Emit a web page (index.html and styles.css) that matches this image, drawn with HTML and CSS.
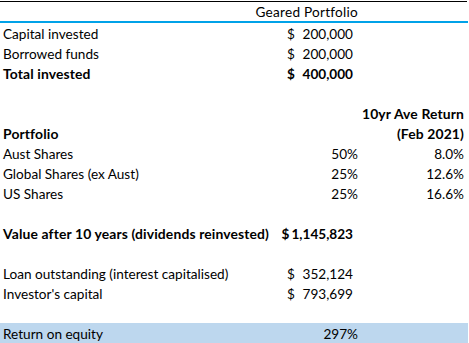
FILE: index.html
```html
<!DOCTYPE html>
<html>
<head>
<meta charset="utf-8">
<link rel="stylesheet" href="styles.css">
</head>
<body>
<div class="sheet">
  <div class="topline"></div>
  <div class="row head">
    <div class="cell title">Geared Portfolio</div>
    <div class="cell"></div>
  </div>
  <div class="blueline"></div>

  <div class="row"><div class="cell a">Capital invested</div><div class="cell b acc"><span>$</span><span>200,000</span></div><div class="cell c"></div></div>
  <div class="row"><div class="cell a">Borrowed funds</div><div class="cell b acc"><span>$</span><span>200,000</span></div><div class="cell c"></div></div>
  <div class="row bold"><div class="cell a">Total invested</div><div class="cell b acc"><span>$</span><span>400,000</span></div><div class="cell c"></div></div>
  <div class="row"><div class="cell a"></div><div class="cell b"></div><div class="cell c"></div></div>
  <div class="row bold"><div class="cell a"></div><div class="cell b"></div><div class="cell c">10yr Ave Return</div></div>
  <div class="row bold"><div class="cell a">Portfolio</div><div class="cell b"></div><div class="cell c">(Feb 2021)</div></div>
  <div class="row"><div class="cell a">Aust Shares</div><div class="cell b pct">50%</div><div class="cell c">8.0%</div></div>
  <div class="row"><div class="cell a">Global Shares (ex Aust)</div><div class="cell b pct">25%</div><div class="cell c">12.6%</div></div>
  <div class="row"><div class="cell a">US Shares</div><div class="cell b pct">25%</div><div class="cell c">16.6%</div></div>
  <div class="row"><div class="cell a"></div><div class="cell b"></div><div class="cell c"></div></div>
  <div class="row bold"><div class="cell a">Value after 10 years (dividends reinvested)</div><div class="cell b acc tight"><span>$</span><span>1,145,823</span></div><div class="cell c"></div></div>
  <div class="row"><div class="cell a"></div><div class="cell b"></div><div class="cell c"></div></div>
  <div class="row"><div class="cell a">Loan outstanding (interest capitalised)</div><div class="cell b acc"><span>$</span><span>352,124</span></div><div class="cell c"></div></div>
  <div class="row"><div class="cell a">Investor's capital</div><div class="cell b acc"><span>$</span><span>793,699</span></div><div class="cell c"></div></div>
  <div class="row"><div class="cell a"></div><div class="cell b"></div><div class="cell c"></div></div>
  <div class="row hl"><div class="cell a">Return on equity</div><div class="cell b pct">297%</div><div class="cell c"></div></div>
</div>
</body>
</html>
```

FILE: styles.css
```css
html, body {
  margin: 0;
  padding: 0;
  background: #ffffff;
}

body {
  font-family: Lato, "Open Sans", sans-serif;
  font-size: 13.6px;
  color: #000000;
}

.sheet {
  width: 468px;
}

.topline {
  margin-top: 1px;
  height: 1px;
  width: 467px;
  background: #000000;
}

.blueline {
  height: 2px;
  background: #00a2e8;
}

.row {
  display: grid;
  grid-template-columns: 284px 77px 107px;
  height: 20px;
}

.row.head {
  height: 19px;
  grid-template-columns: 361px 107px;
}

.cell {
  display: flex;
  align-items: center;
  white-space: nowrap;
  min-width: 0;
  padding-top: 1px;
}

.title {
  justify-content: flex-end;
  padding-right: 3px;
  letter-spacing: 0.25px;
}

.a {
  padding-left: 3px;
}

.b.acc {
  justify-content: space-between;
  padding-left: 3px;
  padding-right: 8px;
}

.b.acc.tight {
  justify-content: flex-end;
  gap: 2px;
  padding-left: 4px;
}

.b.pct {
  justify-content: flex-end;
  padding-right: 3px;
}

.c {
  justify-content: flex-end;
  padding-right: 4px;
}

.bold {
  font-weight: 700;
}

.bold .a,
.bold .c {
  font-size: 13.9px;
  letter-spacing: 0.13px;
}

.hl {
  background: #bdd7ee;
}
```
